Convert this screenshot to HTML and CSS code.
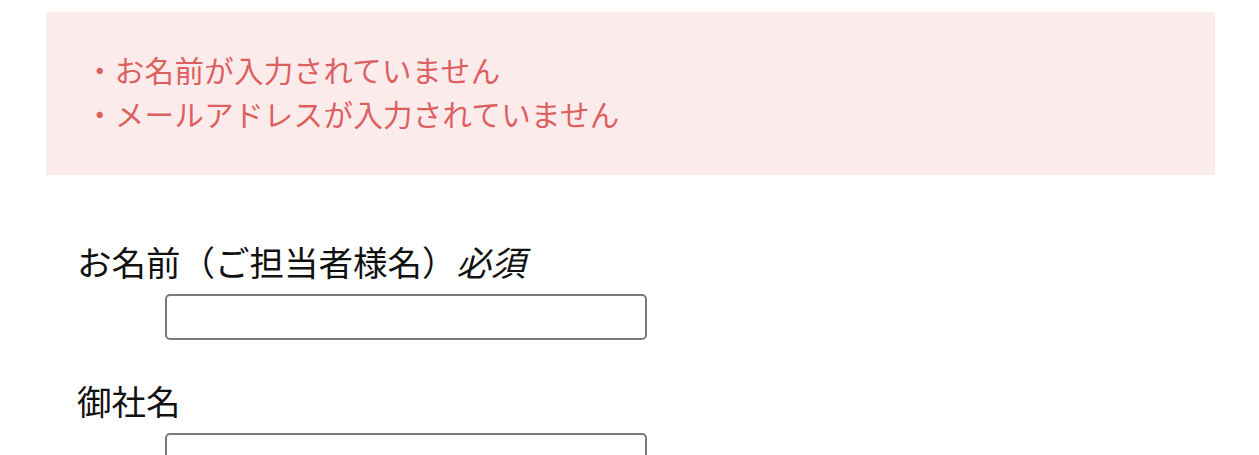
FILE: index.html
```html
<!DOCTYPE html>
<html lang="ja">
<head>
<meta charset="utf-8">
<title>お問い合わせ</title>
<link rel="stylesheet" href="styles.css">
</head>
<body>
<div class="page">
  <div class="errors">
    <p class="error-line">・お名前が入力されていません</p>
    <p class="error-line">・メールアドレスが入力されていません</p>
  </div>
  <form class="form">
    <div class="field">
      <label class="label" for="name">お名前（ご担当者様名）<em class="req">必須</em></label>
      <input class="input" id="name" type="text">
    </div>
    <div class="field">
      <label class="label" for="company">御社名</label>
      <input class="input" id="company" type="text">
    </div>
  </form>
</div>
</body>
</html>
```

FILE: styles.css
```css
html, body {
  margin: 0;
  padding: 0;
  background: #ffffff;
}
body {
  font-family: "Noto Sans CJK JP", "Noto Sans", sans-serif;
  color: #111111;
}
.page {
  padding: 12px 44px 0 46px;
}
.errors {
  background: #fcebeb;
  padding: 35px 0 40px 39px;
}
.error-line {
  margin: 0;
  font-size: 29.5px;
  letter-spacing: 0.3px;
  line-height: 44px;
  color: #dd5f5f;
}
.form {
  padding: 65px 0 0 31px;
}
.field {
  display: flex;
  flex-direction: column;
  align-items: flex-start;
  margin-bottom: 39px;
}
.label {
  font-size: 34.5px;
  line-height: 42px;
  margin-bottom: 12px;
}
.req {
  font-style: italic;
}
.input {
  margin-left: 88px;
  width: 482px;
  height: 46px;
  box-sizing: border-box;
  border: 2px solid #7a7a7a;
  border-radius: 5px;
  background: #fff;
  padding: 0 8px;
  font-size: 20px;
}
```
